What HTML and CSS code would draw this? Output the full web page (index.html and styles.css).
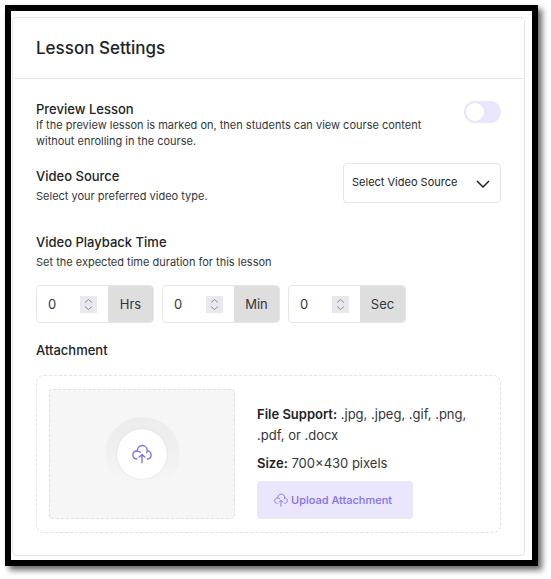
FILE: index.html
```html
<!DOCTYPE html>
<html lang="en">
<head>
    <meta charset="UTF-8">
    <meta name="viewport" content="width=device-width, initial-scale=1.0">
    <title>Lesson Settings</title>
    <link rel="stylesheet" href="styles.css">
</head>
<body>
    <!-- shared icons -->
    <svg class="sprite" aria-hidden="true">
        <symbol id="icon-upload" viewBox="0 0 20 20">
            <path d="M4.600 15C2.400 14.600 .9 13 .9 10.900C.9 8.700 2.600 7.100 4.900 7C6.200 7 7.400 7.500 8.200 8.300M5.200 6.900C5.200 4 7.300 1.500 10.200 1.500C13 1.500 15.200 3.700 15.200 6.500C15.200 7.200 15 7.900 14.600 8.500M15.200 6.600C17.500 7 19.100 8.800 19.100 11C19.100 13 17.500 14.700 15.400 15M10 18.800V11.200M7.200 13L10 10.600L12.800 13"/>
        </symbol>
        <symbol id="icon-spin" viewBox="0 0 17 17">
            <path d="M5 6.500L8.500 3.500L12 6.500M5 10.500L8.500 13.500L12 10.500"/>
        </symbol>
    </svg>

    <div class="frame">
        <section class="card">
            <h1 class="card-header">Lesson Settings</h1>

            <div class="card-body">
                <div class="row preview-row">
                    <div class="row-text">
                        <label class="label" for="preview">Preview Lesson</label>
                        <p class="hint">If the preview lesson is marked on, then students can view course content without enrolling in the course.</p>
                    </div>
                    <input type="checkbox" id="preview" class="toggle">
                </div>

                <div class="row source-row">
                    <div class="row-text spaced">
                        <label class="label" for="source">Video Source</label>
                        <p class="hint">Select your preferred video type.</p>
                    </div>
                    <div class="select-box">
                        <select id="source">
                            <option>Select Video Source</option>
                        </select>
                        <svg class="chevron" viewBox="0 0 14 8" aria-hidden="true"><path d="M1 1L7 7L13 1"/></svg>
                    </div>
                </div>

                <div class="spaced">
                    <h2 class="label">Video Playback Time</h2>
                    <p class="hint">Set the expected time duration for this lesson</p>
                </div>
                <div class="times">
                    <div class="time">
                        <input type="number" id="hrs" value="0" min="0">
                        <svg class="spin" aria-hidden="true"><use href="#icon-spin"/></svg>
                        <label class="unit" for="hrs">Hrs</label>
                    </div>
                    <div class="time">
                        <input type="number" id="min" value="0" min="0">
                        <svg class="spin" aria-hidden="true"><use href="#icon-spin"/></svg>
                        <label class="unit" for="min">Min</label>
                    </div>
                    <div class="time">
                        <input type="number" id="sec" value="0" min="0">
                        <svg class="spin" aria-hidden="true"><use href="#icon-spin"/></svg>
                        <label class="unit" for="sec">Sec</label>
                    </div>
                </div>

                <h2 class="label">Attachment</h2>
                <div class="attachment">
                    <div class="dropzone">
                        <div class="halo">
                            <div class="disc">
                                <svg class="icon-large" aria-hidden="true"><use href="#icon-upload"/></svg>
                            </div>
                        </div>
                    </div>
                    <div class="file-info">
                        <p><strong>File Support:</strong> .jpg, .jpeg, .gif, .png, .pdf, or .docx</p>
                        <p><strong>Size:</strong> 700×430 pixels</p>
                        <button type="button" class="upload-button">
                            <svg class="icon-small" aria-hidden="true"><use href="#icon-upload"/></svg>
                            Upload Attachment
                        </button>
                    </div>
                </div>
            </div>
        </section>
    </div>
</body>
</html>
```
FILE: styles.css
```css
* {
    box-sizing: border-box;
}

body {
    margin: 0;
    padding: 5px 13px 12px 5px;
    background: #fff;
    font-family: Inter, "Liberation Sans", sans-serif;
    color: #212327;
}

h1, h2, p {
    margin: 0;
}

.sprite {
    display: none;
}

.frame {
    border: 6px solid #000;
    padding: 6px 7px 4px 1px;
    background: #fff;
    box-shadow: 4px 4px 6px rgba(0, 0, 0, 0.6);
}

.card {
    border: 1px solid #e6e6e6;
    border-radius: 4px;
}

.card-header {
    padding: 18px 23px;
    border-bottom: 1px solid #e6e6e6;
    font-size: 17px;
    font-weight: 500;
    line-height: 24px;
}

.card-body {
    padding: 22px 23px;
}

.row {
    display: flex;
    justify-content: space-between;
    gap: 24px;
}

.row-text {
    flex: 1;
}

.preview-row {
    margin-bottom: 14px;
}

.source-row {
    margin-bottom: 30px;
}

.source-row .row-text {
    padding-top: 5px;
}

.label {
    display: block;
    font-size: 13px;
    font-weight: 500;
    line-height: 16px;
}

.hint {
    font-size: 11px;
    line-height: 16px;
    color: #33353a;
}

.spaced .hint {
    margin-top: 4px;
}

.toggle {
    appearance: none;
    width: 37px;
    height: 22px;
    margin: 0;
    padding: 2px;
    border-radius: 11px;
    background: #eae6fb;
    cursor: pointer;
}

.toggle::before {
    content: "";
    display: block;
    width: 18px;
    height: 18px;
    border-radius: 50%;
    background: #fff;
}

.toggle:checked {
    background: #7f6af0;
}

.toggle:checked::before {
    margin-left: auto;
}

.select-box {
    position: relative;
    width: 158px;
}

.select-box select {
    appearance: none;
    width: 100%;
    height: 40px;
    padding: 0 30px 2px 8px;
    border: 1px solid #e6e6e6;
    border-radius: 4px;
    background: #fff;
    font-family: inherit;
    font-size: 11px;
    color: #212327;
}

.chevron {
    position: absolute;
    top: 17px;
    right: 11px;
    width: 14px;
    height: 8px;
    fill: none;
    stroke: #212327;
    stroke-width: 1.5;
    pointer-events: none;
}

.times {
    display: flex;
    gap: 8px;
    margin: 15px 0 19px;
}

.time {
    display: flex;
    align-items: center;
    width: 118px;
    height: 38px;
    border: 1px solid #e6e6e6;
    border-radius: 4px;
    overflow: hidden;
}

.time input {
    appearance: textfield;
    flex: 1;
    min-width: 0;
    padding: 0 0 0 11px;
    border: none;
    background: none;
    font-family: inherit;
    font-size: 13px;
    color: #33353a;
}

.time input::-webkit-inner-spin-button {
    display: none;
}

.spin {
    width: 17px;
    height: 17px;
    margin-right: 11px;
    background: #e9e8ee;
    fill: none;
    stroke: #8b8a94;
}

.unit {
    width: 45px;
    background: #dedede;
    font-size: 13px;
    line-height: 36px;
    text-align: center;
    color: #33353a;
}

.attachment {
    display: flex;
    gap: 22px;
    margin-top: 17px;
    padding: 13px 12px;
    border: 1px dashed #e3e3e3;
    border-radius: 8px;
}

.dropzone {
    display: flex;
    justify-content: center;
    align-items: center;
    width: 186px;
    height: 130px;
    border: 1px dashed #e0e0e0;
    border-radius: 4px;
    background: #f6f6f6;
}

.halo {
    display: flex;
    justify-content: center;
    align-items: center;
    width: 75px;
    height: 75px;
    border-radius: 50%;
    background: linear-gradient(#ededed 20%, #f6f6f6 90%);
}

.disc {
    display: flex;
    justify-content: center;
    align-items: center;
    width: 50px;
    height: 50px;
    border-radius: 50%;
    background: #fff;
    box-shadow: 0 0 2px rgba(0, 0, 0, 0.12);
}

.icon-large, .icon-small {
    fill: none;
    stroke: #836ff0;
    stroke-linecap: round;
    stroke-linejoin: round;
}

.icon-large {
    width: 20px;
    height: 20px;
    stroke-width: 1.4;
}

.icon-small {
    width: 14px;
    height: 14px;
    stroke-width: 1.3;
}

.file-info {
    display: flex;
    flex-direction: column;
    justify-content: flex-end;
    align-items: flex-start;
    flex: 1;
    font-size: 13px;
    line-height: 21px;
    color: #33353a;
}

.file-info p {
    margin-bottom: 7px;
}

.file-info strong {
    font-weight: 600;
    color: #212327;
}

.upload-button {
    display: flex;
    align-items: center;
    gap: 3px;
    height: 38px;
    padding: 0 21px 0 17px;
    border: none;
    border-radius: 4px;
    background: #eae6fb;
    font-family: inherit;
    font-size: 11px;
    font-weight: 500;
    color: #836ff0;
    cursor: pointer;
}
```
